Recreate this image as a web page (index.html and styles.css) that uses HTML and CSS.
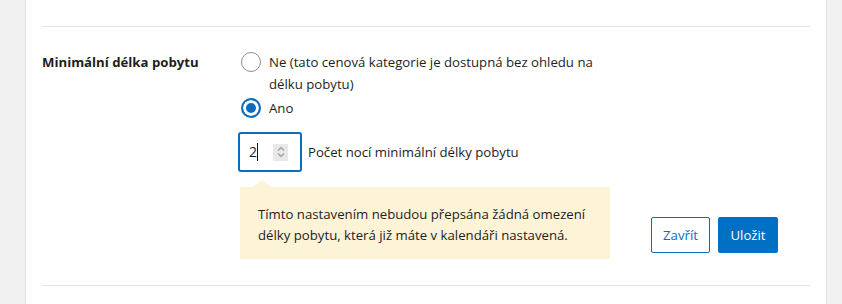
FILE: index.html
```html
<!DOCTYPE html>
<html lang="cs">
<head>
<meta charset="utf-8">
<link rel="stylesheet" href="styles.css">
</head>
<body>
<div class="panel">
  <div class="inner">
    <hr class="sep">
    <div class="row">
      <div class="label">Minimální délka pobytu</div>
      <div class="content">
        <div class="radios">
          <label class="radio"><span class="circle"></span><span class="rtext">Ne (tato cenová kategorie je dostupná bez ohledu na délku pobytu)</span></label>
          <label class="radio"><span class="circle checked"></span><span class="rtext">Ano</span></label>
        </div>
        <div class="numrow">
          <div class="numbox"><span class="val">2</span><span class="caret"></span><span class="spin"><svg width="14" height="16" viewBox="0 0 14 16"><path d="M4 6.5 L7 3.5 L10 6.5" fill="none" stroke="#9a9a9a" stroke-width="1.2"/><path d="M4 9.5 L7 12.5 L10 9.5" fill="none" stroke="#9a9a9a" stroke-width="1.2"/></svg></span></div>
          <span class="numlabel">Počet nocí minimální délky pobytu</span>
        </div>
        <div class="bottom">
          <div class="notice">Tímto nastavením nebudou přepsána žádná omezení délky pobytu, která již máte v kalendáři nastavená.</div>
          <div class="actions">
            <button class="btn outline">Zavřít</button>
            <button class="btn primary">Uložit</button>
          </div>
        </div>
      </div>
    </div>
    <hr class="sep bottom-sep">
  </div>
</div>
</body>
</html>
```
FILE: styles.css
```css
html, body {
  margin: 0;
  padding: 0;
  background: #f1f1f1;
  font-family: "Open Sans", "Noto Sans", sans-serif;
  font-size: 13.2px;
  color: #1e1e1e;
}
.panel {
  margin-left: 25px;
  width: 800px;
  height: 304px;
  background: #fff;
  border-left: 1px solid #e3e3e3;
  border-right: 1px solid #e3e3e3;
}
.inner {
  padding: 26px 16px 0 16px;
}
.sep {
  margin: 0;
  border: 0;
  height: 1px;
  background: #e5e5e5;
}
.row {
  display: flex;
  padding-top: 24px;
}
.label {
  width: 196px;
  font-weight: 700;
  line-height: 22px;
}
.content {
  flex: 1;
  display: flex;
  flex-direction: column;
}
.radios {
  display: flex;
  flex-direction: column;
  gap: 2px;
  width: 370px;
}
.radio {
  display: flex;
  align-items: flex-start;
  line-height: 22px;
}
.circle {
  flex: none;
  box-sizing: border-box;
  width: 20px;
  height: 20px;
  margin: 1px 8px 0 3px;
  border-radius: 50%;
  border: 1px solid #8c8c8c;
  background: #fff;
}
.circle.checked {
  border: 2px solid #0a6ebd;
  box-shadow: inset 0 0 0 3px #fff;
  background: #0a6ebd;
}
.numrow {
  display: flex;
  align-items: center;
  margin-top: 13px;
}
.numbox {
  box-sizing: border-box;
  width: 64px;
  height: 40px;
  border: 2px solid #0a6ebd;
  border-radius: 3px;
  display: flex;
  align-items: center;
  padding-left: 9px;
}
.val {
  line-height: 20px;
  font-size: 14px;
}
.caret {
  width: 1px;
  height: 18px;
  background: #111;
}
.spin {
  margin-left: auto;
  margin-right: 12px;
  width: 15px;
  height: 17px;
  background: #e8e8e8;
  display: flex;
  align-items: center;
  justify-content: center;
}
.numlabel {
  margin-left: 6px;
}
.bottom {
  display: flex;
  align-items: flex-end;
  margin-top: 15px;
}
.notice {
  position: relative;
  margin-left: 2px;
  width: 334px;
  background: #fdf3d7;
  padding: 17px 18px 13px 18px;
  line-height: 21px;
}
.notice::before {
  content: "";
  position: absolute;
  top: -7px;
  left: 13px;
  border-left: 9px solid transparent;
  border-right: 9px solid transparent;
  border-bottom: 7px solid #fdf3d7;
}
.actions {
  display: flex;
  gap: 8px;
  margin-left: 41px;
  margin-bottom: 6px;
}
.btn {
  box-sizing: border-box;
  height: 36px;
  padding: 0;
  font-family: inherit;
  font-size: 13.2px;
  border-radius: 2px;
  cursor: pointer;
}
.btn.outline {
  width: 59px;
  background: #fff;
  color: #0a6ebd;
  border: 1px solid #0a6ebd;
}
.btn.primary {
  width: 60px;
  background: #0070c4;
  color: #fff;
  border: 1px solid #0070c4;
}
.bottom-sep {
  margin-top: 26px;
}
```
